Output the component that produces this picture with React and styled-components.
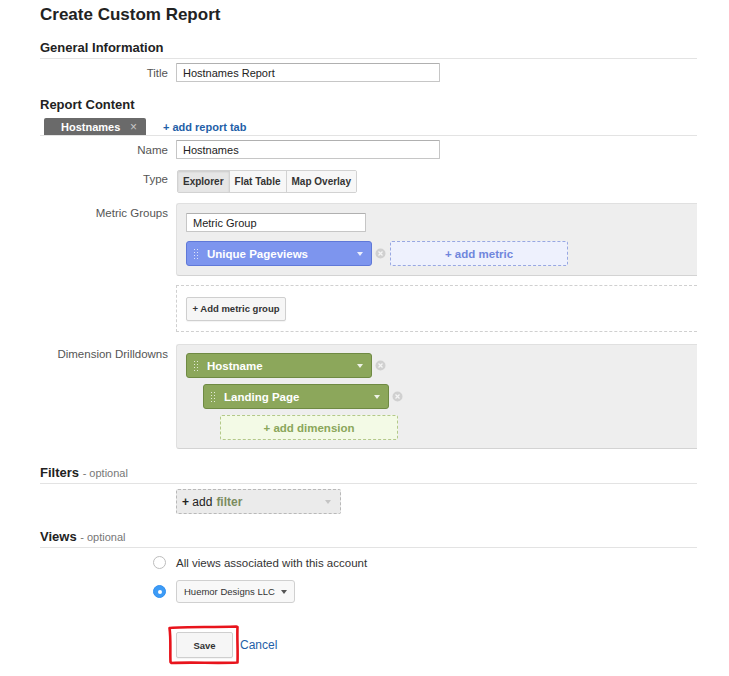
import React from "react";
import styled, { createGlobalStyle } from "styled-components";

const GlobalStyle = createGlobalStyle`
  html, body { margin: 0; padding: 0; background: #fff; }
  body { font-family: "Liberation Sans", Arial, Helvetica, sans-serif; color: #333; }
  * { box-sizing: border-box; }
`;

const Page = styled.div`
  width: 697px;
  padding: 0 0 12px 40px;
`;

const PageTitle = styled.h1`
  margin: 0;
  height: 30px;
  line-height: 30px;
  font-size: 17px;
  font-weight: bold;
  color: #222;
`;

const SectionHeading = styled.h2`
  margin: ${(p) => p.$top || 10}px 0 0;
  line-height: 16px;
  padding-bottom: ${(p) => (p.$ruled ? 2 : 0)}px;
  border-bottom: ${(p) => (p.$ruled ? "1px solid #e3e3e3" : "none")};
  font-size: 13px;
  font-weight: bold;
  color: #222;
`;

const Optional = styled.span`
  font-size: 11px;
  font-weight: normal;
  color: #777;
`;

const Row = styled.div`
  display: flex;
  align-items: ${(p) => p.$align || "center"};
  margin-top: ${(p) => p.$top || 0}px;
`;

const Label = styled.div`
  width: 136px;
  flex: none;
  padding-right: 8px;
  padding-top: ${(p) => p.$pt || 0}px;
  text-align: right;
  font-size: 11.5px;
  color: #555;
`;

const RadioCell = styled.div`
  width: 136px;
  flex: none;
  display: flex;
  justify-content: flex-end;
  padding-right: 10px;
`;

const TextInput = styled.input`
  width: ${(p) => p.$w || 264}px;
  height: ${(p) => p.$h || 19}px;
  border: 1px solid #c6c6c6;
  border-top-color: #b0b0b0;
  border-radius: 1px;
  padding: 0 6px;
  font-family: inherit;
  font-size: 11px;
  color: #222;
  background: #fff;
  outline: none;
`;

const TabBar = styled.div`
  display: flex;
  align-items: flex-end;
  height: 18px;
  margin-top: 5px;
  padding-left: 4px;
  border-bottom: 1px solid #e3e3e3;
`;

const Tab = styled.div`
  width: 102px;
  height: 17px;
  display: flex;
  align-items: center;
  justify-content: space-between;
  padding: 0 9px 0 17px;
  background: #6a6a6a;
  border-radius: 2px 2px 0 0;
  color: #fff;
  font-size: 11px;
  font-weight: bold;
`;

const TabClose = styled.span`
  color: #c8c8c8;
  font-size: 12px;
  font-weight: normal;
`;

const LinkButton = styled.span`
  margin-left: ${(p) => p.$ml || 0}px;
  align-self: center;
  padding-top: ${(p) => p.$pt || 0}px;
  color: #1f5fa8;
  font-size: ${(p) => p.$size || 11}px;
  font-weight: ${(p) => (p.$bold ? "bold" : "normal")};
  white-space: nowrap;
  cursor: pointer;
`;

const Segmented = styled.div`
  display: flex;
  height: 23px;
  margin-left: 1px;
  border: 1px solid #d2d2d2;
  border-radius: 2px;
  overflow: hidden;
`;

const Segment = styled.div`
  display: flex;
  align-items: center;
  padding: 0 5px;
  font-size: 10px;
  font-weight: bold;
  color: #333;
  white-space: nowrap;
  background: ${(p) => (p.$active ? "#e6e6e6" : "#f7f7f7")};
  box-shadow: ${(p) => (p.$active ? "inset 0 1px 2px rgba(0,0,0,0.12)" : "none")};
  & + & { border-left: 1px solid #d2d2d2; }
`;

const Stack = styled.div`
  display: flex;
  flex-direction: column;
  gap: ${(p) => p.$gap || 0}px;
  flex: 1;
`;

const GrayBox = styled.div`
  display: flex;
  flex-direction: column;
  gap: ${(p) => p.$gap || 9}px;
  padding: ${(p) => p.$pad || "9px 0 9px 9px"};
  background: #eeeeee;
  border: 1px solid #e0e0e0;
  border-bottom-color: #d3d3d3;
  border-radius: 3px 0 0 3px;
  border-right: none;
`;

const DashedBox = styled.div`
  height: 47px;
  display: flex;
  align-items: center;
  padding-left: 9px;
  border: 1px dashed #d0d0d0;
  border-right: none;
`;

const ChipRow = styled.div`
  display: flex;
  align-items: center;
  padding-left: ${(p) => p.$indent || 0}px;
`;

const Chip = styled.div`
  width: 186px;
  height: 25px;
  display: flex;
  align-items: center;
  padding: 0 8px 0 6px;
  border-radius: 3px;
  background: ${(p) => (p.$tone === "blue" ? "#7d95ee" : "#8ca75b")};
  border: 1px solid ${(p) => (p.$tone === "blue" ? "#5f78d8" : "#6f8a43")};
  color: #fff;
  font-size: 11.5px;
  font-weight: bold;
`;

const Grip = styled.span`
  width: 5px;
  height: 12px;
  margin-right: 9px;
  background-image: radial-gradient(circle, rgba(255,255,255,0.75) 0.8px, transparent 1px);
  background-size: 3px 3px;
  flex: none;
`;

const ChipText = styled.span`
  flex: 1;
`;

const Caret = styled.span`
  width: 0;
  height: 0;
  margin-left: ${(p) => p.$ml || 0}px;
  border-left: 3.5px solid transparent;
  border-right: 3.5px solid transparent;
  border-top: 4px solid ${(p) => p.$color || "rgba(255,255,255,0.85)"};
  flex: none;
`;

const RemoveIcon = styled.svg`
  margin: 0 4px 0 3px;
  flex: none;
`;

const AddSlot = styled.div`
  width: 178px;
  height: 25px;
  display: flex;
  align-items: center;
  justify-content: center;
  border: 1px dashed ${(p) => (p.$tone === "blue" ? "#98a8e2" : "#b4c98a")};
  background: ${(p) => (p.$tone === "blue" ? "#eef1fd" : "#f3fae6")};
  color: ${(p) => (p.$tone === "blue" ? "#7086dc" : "#8aa65a")};
  border-radius: 2px;
  font-size: 11.5px;
  font-weight: bold;
`;

const PlainButton = styled.button`
  height: ${(p) => p.$h || 24}px;
  width: ${(p) => p.$w || "auto"}px;
  padding: 0 4px;
  border: 1px solid #cfcfcf;
  border-radius: 2px;
  background: #f6f6f6;
  font-family: inherit;
  font-size: 9.5px;
  font-weight: bold;
  color: #333;
  white-space: nowrap;
  box-shadow: 0 1px 1px rgba(0,0,0,0.05);
`;

const FilterPicker = styled.div`
  width: 165px;
  height: 25px;
  display: flex;
  align-items: center;
  padding: 0 9px 0 5px;
  margin-top: 5px;
  background: #ebebeb;
  border: 1px dashed #b9b9b9;
  border-radius: 2px;
  font-size: 12px;
  color: #222;
`;

const FilterWord = styled.span`
  margin-left: 4px;
  flex: 1;
  color: #7c8c5f;
  font-weight: bold;
`;

const Radio = styled.span`
  width: 13px;
  height: 13px;
  border-radius: 50%;
  flex: none;
  display: flex;
  align-items: center;
  justify-content: center;
  border: 1px solid ${(p) => (p.$checked ? "#2f8ff0" : "#bdbdbd")};
  background: ${(p) => (p.$checked ? "#3d9bf6" : "#fff")};
  &::after {
    content: "";
    width: 4px;
    height: 4px;
    border-radius: 50%;
    background: ${(p) => (p.$checked ? "#fff" : "transparent")};
  }
`;

const RadioText = styled.span`
  font-size: 11.5px;
  color: #333;
`;

const Select = styled.div`
  width: 119px;
  height: 23px;
  display: flex;
  align-items: center;
  justify-content: space-between;
  padding: 0 8px 0 7px;
  border: 1px solid #d0d0d0;
  border-radius: 3px;
  background: #f8f8f8;
  font-size: 9.5px;
  white-space: nowrap;
  color: #333;
`;

const SaveWrap = styled.div`
  position: relative;
  display: flex;
`;

const Scribble = styled.svg`
  position: absolute;
  left: -9px;
  top: -8px;
  pointer-events: none;
`;

function XIcon() {
  return (
    <RemoveIcon width="11" height="11" viewBox="0 0 11 11">
      <circle cx="5.5" cy="5.5" r="5" fill="#d0d0d0" />
      <path d="M3.5 3.5 L7.5 7.5 M7.5 3.5 L3.5 7.5" stroke="#f4f4f4" strokeWidth="1.3" />
    </RemoveIcon>
  );
}

function MetricChip({ tone, children }) {
  return (
    <Chip $tone={tone}>
      <Grip />
      <ChipText>{children}</ChipText>
      <Caret />
    </Chip>
  );
}

export default function App() {
  return (
    <>
      <GlobalStyle />
      <Page>
        <PageTitle>Create Custom Report</PageTitle>

        <SectionHeading $top={10} $ruled>General Information</SectionHeading>
        <Row $top={4}>
          <Label>Title</Label>
          <TextInput defaultValue="Hostnames Report" />
        </Row>

        <SectionHeading $top={15}>Report Content</SectionHeading>
        <TabBar>
          <Tab>
            Hostnames <TabClose>×</TabClose>
          </Tab>
          <LinkButton $ml={17} $bold $pt={1}>+ add report tab</LinkButton>
        </TabBar>
        <Row $top={4}>
          <Label>Name</Label>
          <TextInput $h={19} defaultValue="Hostnames" />
        </Row>
        <Row $top={11} $align="flex-start">
          <Label $pt={3}>Type</Label>
          <Segmented>
            <Segment $active>Explorer</Segment>
            <Segment>Flat Table</Segment>
            <Segment>Map Overlay</Segment>
          </Segmented>
        </Row>

        <Row $top={10} $align="flex-start">
          <Label $pt={4}>Metric Groups</Label>
          <Stack $gap={9}>
            <GrayBox>
              <TextInput $w={180} defaultValue="Metric Group" />
              <ChipRow>
                <MetricChip tone="blue">Unique Pageviews</MetricChip>
                <XIcon />
                <AddSlot $tone="blue">+ add metric</AddSlot>
              </ChipRow>
            </GrayBox>
            <DashedBox>
              <PlainButton $w={100}>+ Add metric group</PlainButton>
            </DashedBox>
          </Stack>
        </Row>

        <Row $top={12} $align="flex-start">
          <Label $pt={4}>Dimension Drilldowns</Label>
          <Stack>
            <GrayBox $gap={6} $pad="8px 0 8px 9px">
              <ChipRow>
                <MetricChip tone="green">Hostname</MetricChip>
                <XIcon />
              </ChipRow>
              <ChipRow $indent={17}>
                <MetricChip tone="green">Landing Page</MetricChip>
                <XIcon />
              </ChipRow>
              <ChipRow $indent={34}>
                <AddSlot $tone="green">+ add dimension</AddSlot>
              </ChipRow>
            </GrayBox>
          </Stack>
        </Row>

        <SectionHeading $top={16} $ruled>
          Filters <Optional>- optional</Optional>
        </SectionHeading>
        <Row>
          <Label />
          <FilterPicker>
            <b>+</b>&nbsp;add<FilterWord>filter</FilterWord>
            <Caret $color="#c4c4c4" />
          </FilterPicker>
        </Row>

        <SectionHeading $top={15} $ruled>
          Views <Optional>- optional</Optional>
        </SectionHeading>
        <Row $top={8}>
          <RadioCell>
            <Radio />
          </RadioCell>
          <RadioText>All views associated with this account</RadioText>
        </Row>
        <Row $top={11}>
          <RadioCell>
            <Radio $checked />
          </RadioCell>
          <Select>
            Huemor Designs LLC
            <Caret $color="#555" $ml={6} />
          </Select>
        </Row>

        <Row $top={29}>
          <Label />
          <SaveWrap>
            <PlainButton $w={57} $h={26}>Save</PlainButton>
            <Scribble width="75" height="42" viewBox="0 0 75 42">
              <path
                d="M3 4 C20 2.5 45 3.5 69 2.5 L70.5 3 C70 14 71 27 70.5 38.5 C50 39.5 25 38 4.5 39 L3.5 38 C3 27 4 14 2.5 4 Z"
                fill="none"
                stroke="#e8141c"
                strokeWidth="2.6"
                strokeLinejoin="round"
              />
            </Scribble>
          </SaveWrap>
          <LinkButton $ml={7} $size={12}>Cancel</LinkButton>
        </Row>
      </Page>
    </>
  );
}
